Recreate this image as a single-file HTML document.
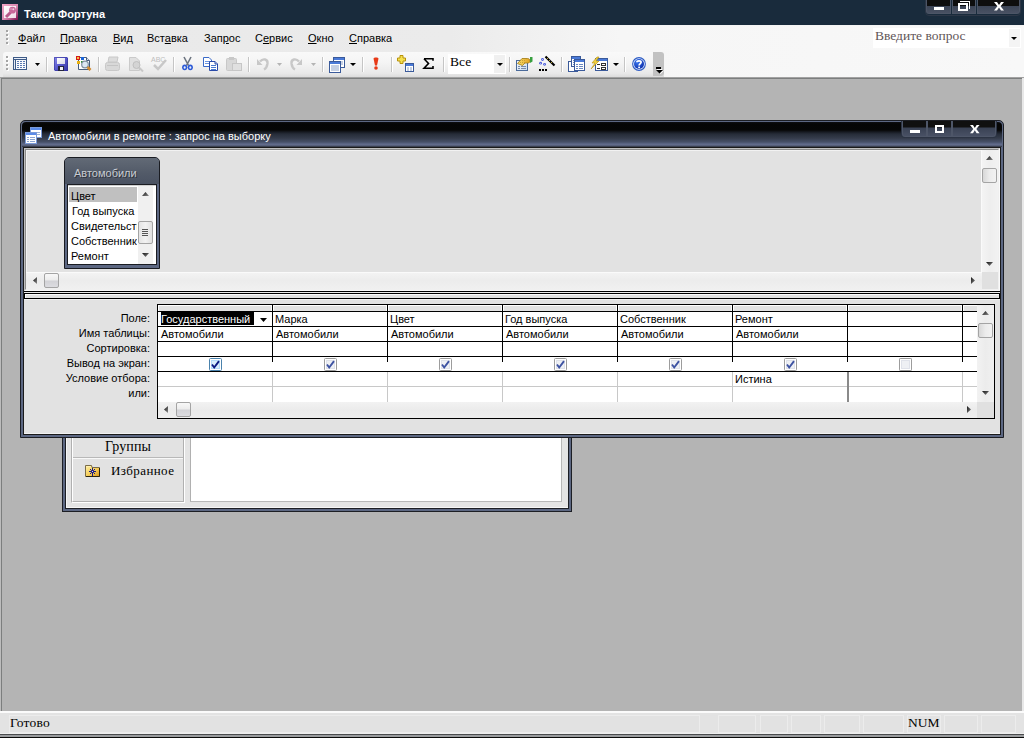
<!DOCTYPE html>
<html><head><meta charset="utf-8">
<style>
*{margin:0;padding:0;box-sizing:border-box}
html,body{width:1024px;height:738px;overflow:hidden;background:#b4b4b4;font-family:"Liberation Sans",sans-serif;font-size:11px;color:#000}
.a{position:absolute}
.t{position:absolute;white-space:nowrap;line-height:13px}
.u{text-decoration:underline}
svg{position:absolute;overflow:visible}
.sep{position:absolute;top:57px;width:2px;height:15px;border-left:1px solid #c5c5c5;border-right:1px solid #fff}
.serif{font-family:"Liberation Serif",serif}
</style></head><body>
<svg width="0" height="0" style="position:absolute"><defs><linearGradient id="agv" x1="0" y1="0" x2="1" y2="1"><stop offset="0" stop-color="#141414"/><stop offset="1" stop-color="#8a8a8a"/></linearGradient></defs></svg>

<!-- ===== Title bar ===== -->
<div class="a" style="left:0;top:0;width:1024px;height:25px;background:#192b3c"></div>
<svg style="left:2px;top:4px" width="16" height="16" viewBox="0 0 16 16">
  <defs><linearGradient id="ak" x1="0" y1="0" x2="1" y2="1"><stop offset="0" stop-color="#f4a8c8"/><stop offset=".55" stop-color="#d888b0"/><stop offset="1" stop-color="#7a0a4a"/></linearGradient>
  <linearGradient id="ai" x1="0" y1="0" x2="1" y2="1"><stop offset="0" stop-color="#fff"/><stop offset="1" stop-color="#f0dce8"/></linearGradient></defs>
  <rect x="0" y="0" width="16" height="16" fill="url(#ak)"/>
  <rect x="2" y="2" width="12" height="12" fill="url(#ai)"/>
  <path d="M8.5 8.5L4 13" stroke="#b8588a" stroke-width="3"/>
  <circle cx="10.5" cy="6.2" r="3.4" fill="#c8689a"/>
  <circle cx="11.3" cy="5.2" r="1" fill="#f4d0e4"/>
  <circle cx="9" cy="5" r=".7" fill="#f0c0d8"/>
</svg>
<div class="t" style="left:24px;top:8px;color:#fff;font-weight:bold">Такси Фортуна</div>
<!-- caption buttons -->
<div class="a" style="left:925px;top:-3px;width:96px;height:19px;border:1px solid #2c3646;border-radius:0 0 4px 4px;background:#192b3c"></div>
<div class="a" style="left:926px;top:0;width:25px;height:14px;background:linear-gradient(#0e0e0e 0,#0e0e0e 6px,#3c4556 6px,#4a5264 14px);border:1px solid #4c5566;border-top:0;border-radius:0 0 0 3px"></div>
<div class="a" style="left:952px;top:0;width:24px;height:14px;background:linear-gradient(#0e0e0e 0,#0e0e0e 6px,#3c4556 6px,#4a5264 14px);border:1px solid #4c5566;border-top:0"></div>
<div class="a" style="left:977px;top:0;width:43px;height:14px;background:linear-gradient(#0e0e0e 0,#0e0e0e 6px,#3c4556 6px,#4a5264 14px);border:1px solid #4c5566;border-top:0;border-radius:0 0 3px 0"></div>
<div class="a" style="left:934px;top:7px;width:10px;height:3px;background:#fff"></div>
<svg style="left:956px;top:0" width="16" height="13" viewBox="0 0 16 13">
  <rect x="4" y="1" width="10" height="1" fill="#fff"/>
  <rect x="13" y="1" width="1" height="8" fill="#fff"/>
  <rect x="3" y="4" width="8" height="6" fill="none" stroke="#fff" stroke-width="2"/>
</svg>
<svg style="left:994px;top:2px" width="10" height="9" viewBox="0 0 10 9">
  <path d="M0 0H3L5 3L7 0H10L6.6 4.3L10 8.6H7L5 5.6L3 8.6H0L3.4 4.3Z" fill="#fff"/>
</svg>

<!-- ===== Menu bar ===== -->
<div class="a" style="left:0;top:25px;width:1024px;height:52px;background:linear-gradient(to right,#e9e9e9 0,#ebebeb 450px,#f6f6f6 620px,#f8f8f8 1024px)"></div>
<div class="a" style="left:0;top:25px;width:1024px;height:1px;background:#f4f4f4"></div>
<svg style="left:6px;top:30px" width="3" height="15" viewBox="0 0 3 15">
  <g fill="#fff"><rect x="1" y="1" width="2" height="2"/><rect x="1" y="5" width="2" height="2"/><rect x="1" y="9" width="2" height="2"/><rect x="1" y="13" width="2" height="2"/></g>
  <g fill="#a4a4a4"><rect x="0" y="0" width="2" height="2"/><rect x="0" y="4" width="2" height="2"/><rect x="0" y="8" width="2" height="2"/><rect x="0" y="12" width="2" height="2"/></g>
</svg>
<div class="t" style="left:18px;top:32px"><span class="u">Ф</span>айл</div>
<div class="t" style="left:60px;top:32px"><span class="u">П</span>равка</div>
<div class="t" style="left:113px;top:32px"><span class="u">В</span>ид</div>
<div class="t" style="left:147px;top:32px">Вст<span class="u">а</span>вка</div>
<div class="t" style="left:204px;top:32px">Зап<span class="u">р</span>ос</div>
<div class="t" style="left:255px;top:32px">С<span class="u">е</span>рвис</div>
<div class="t" style="left:308px;top:32px"><span class="u">О</span>кно</div>
<div class="t" style="left:349px;top:32px"><span class="u">С</span>правка</div>
<!-- question box -->
<div class="a" style="left:873px;top:28px;width:148px;height:20px;background:#fff"></div>
<div class="a" style="left:1009px;top:29px;width:11px;height:18px;background:#f4f4f4"></div>
<div class="t serif" style="left:875px;top:28px;font-size:13.5px;line-height:15px;color:#625658">Введите вопрос</div>
<svg style="left:1011px;top:37px" width="6" height="3" viewBox="0 0 6 3"><path d="M0 0H6L3 3Z" fill="#000"/></svg>

<!-- ===== Toolbar ===== -->
<div class="a" style="left:3px;top:52px;width:661px;height:25px;background:linear-gradient(to bottom,#f9f9f9 0,#f5f5f5 40%,#e9e9e9 85%,#dcdcdc 100%);border-radius:3px 3px 0 0"></div>
<div class="a" style="left:653px;top:52px;width:11px;height:24px;background:#c2c2c2;border-radius:0 3px 3px 0"></div>
<svg style="left:656px;top:67px" width="8" height="8" viewBox="0 0 8 8"><rect x="1" y="2" width="5" height="1" fill="#fff"/><path d="M1 3.5H8L4.5 7Z" fill="#fff"/><rect x="0" y="0" width="5" height="2" fill="#000"/><path d="M0 3H7L3.5 6.5Z" fill="#000"/></svg>
<svg style="left:6px;top:56px" width="3" height="15" viewBox="0 0 3 15">
  <g fill="#fff"><rect x="1" y="1" width="2" height="2"/><rect x="1" y="5" width="2" height="2"/><rect x="1" y="9" width="2" height="2"/><rect x="1" y="13" width="2" height="2"/></g>
  <g fill="#a4a4a4"><rect x="0" y="0" width="2" height="2"/><rect x="0" y="4" width="2" height="2"/><rect x="0" y="8" width="2" height="2"/><rect x="0" y="12" width="2" height="2"/></g>
</svg>
<!-- datasheet icon -->
<svg style="left:13px;top:57px" width="14" height="13" viewBox="0 0 14 13">
  <rect x="0" y="0" width="14" height="13" fill="#3d5a86"/>
  <rect x="1" y="1" width="12" height="1" fill="#e8eef8"/>
  <rect x="1" y="3" width="1" height="9" fill="#e4eaf4"/>
  <rect x="3" y="3" width="10" height="9" fill="#f8fafc"/>
  <g fill="#5a78b0"><rect x="4" y="4" width="2" height="1"/><rect x="7" y="4" width="2" height="1"/><rect x="10" y="4" width="2" height="1"/><rect x="4" y="6" width="2" height="1"/><rect x="7" y="6" width="2" height="1"/><rect x="10" y="6" width="2" height="1"/><rect x="4" y="8" width="2" height="1"/><rect x="7" y="8" width="2" height="1"/><rect x="10" y="8" width="2" height="1"/><rect x="4" y="10" width="2" height="1"/><rect x="7" y="10" width="2" height="1"/><rect x="10" y="10" width="2" height="1"/></g>
</svg>
<svg style="left:35px;top:63px" width="5" height="3" viewBox="0 0 5 3"><path d="M0 0H5L2.5 3Z" fill="#000"/></svg>
<div class="sep" style="left:46px"></div>
<!-- save -->
<svg style="left:54px;top:57px" width="14" height="14" viewBox="0 0 14 14">
  <defs><linearGradient id="sv" x1="0" y1="0" x2="1" y2="1"><stop offset="0" stop-color="#8a8aea"/><stop offset=".5" stop-color="#5858cc"/><stop offset="1" stop-color="#3434a0"/></linearGradient>
  <linearGradient id="lb" x1="0" y1="0" x2="1" y2="1"><stop offset="0" stop-color="#fff"/><stop offset="1" stop-color="#d8d8e8"/></linearGradient></defs>
  <path d="M0 0H13L14 1V14H1L0 13Z" fill="url(#sv)"/>
  <path d="M0.5 13V0.5H13M13.5 1V13.5H1" fill="none" stroke="#2a2a90" stroke-opacity=".5"/>
  <rect x="3" y="1" width="8" height="6" fill="url(#lb)"/>
  <rect x="4" y="9" width="6" height="5" fill="#24243c"/>
  <rect x="6" y="10" width="3" height="3" fill="#f0f0f4"/>
</svg>
<!-- search/preview -->
<svg style="left:76px;top:56px" width="16" height="16" viewBox="0 0 16 16">
  <path d="M2.5 1.5H10.5L13.5 4.5V13.5H2.5Z" fill="#fff" stroke="#465c7c"/>
  <path d="M10.5 1.5V4.5H13.5" fill="#dde4ee" stroke="#465c7c"/>
  <rect x="0" y="0" width="4" height="4" fill="#d41a1a"/><rect x="1" y="1" width="2" height="2" fill="#f4c040"/>
  <rect x="5" y="1" width="3" height="3" fill="#1a64d8"/>
  <rect x="1" y="5" width="3" height="3" fill="#e8b010"/>
  <rect x="5" y="5" width="2" height="2" fill="#2a9a2a"/>
  <circle cx="9" cy="8.5" r="3.3" fill="#dce8f4" stroke="#8090a0" stroke-width="1.2"/>
  <path d="M11.5 11L14.5 14" stroke="#d08a30" stroke-width="2.6"/>
</svg>
<div class="sep" style="left:98px"></div>
<!-- print disabled -->
<svg style="left:105px;top:57px" width="15" height="14" viewBox="0 0 15 14">
  <path d="M4 0H13L12 5H3Z" fill="#dcdcdc" stroke="#c8c8c8"/>
  <rect x="0.5" y="5.5" width="14" height="8" rx="2" fill="#d8d8d8" stroke="#c8c8c8"/>
  <rect x="2" y="8" width="11" height="1" fill="#c4c4c4"/>
</svg>
<svg style="left:129px;top:57px" width="15" height="15" viewBox="0 0 15 15">
  <path d="M0.5 0.5H7L10.5 4V13.5H0.5Z" fill="#e0e0e0" stroke="#cacaca"/>
  <circle cx="7.5" cy="8" r="3.5" fill="#d4d4d4" stroke="#c0c0c0"/>
  <path d="M10 10.5L14 14.5" stroke="#c8c8c8" stroke-width="2"/>
</svg>
<svg style="left:151px;top:56px" width="16" height="14" viewBox="0 0 16 14">
  <text x="0" y="6" font-family="Liberation Sans" font-size="7" fill="#bdbdbd">ABC</text>
  <path d="M3 9L7 13L15 4" fill="none" stroke="#c8c8c8" stroke-width="2.5"/>
</svg>
<div class="sep" style="left:173px"></div>
<!-- scissors -->
<svg style="left:182px;top:57px" width="11" height="14" viewBox="0 0 11 14">
  <path d="M2 0L6.5 8.5M9 0L4.5 8.5" stroke="#6c7480" stroke-width="1.6"/>
  <ellipse cx="2.7" cy="10.3" rx="2.6" ry="2.9" fill="#2c5ad6"/>
  <ellipse cx="8.3" cy="10.3" rx="2.6" ry="2.9" fill="#2c5ad6"/>
  <ellipse cx="2.7" cy="10.5" rx="1" ry="1.3" fill="#e8eef8"/>
  <ellipse cx="8.3" cy="10.5" rx="1" ry="1.3" fill="#e8eef8"/>
</svg>
<!-- copy -->
<svg style="left:203px;top:57px" width="16" height="14" viewBox="0 0 16 14">
  <path d="M0.5 0.5H6L8.5 3V9.5H0.5Z" fill="#fff" stroke="#3a6ac8"/>
  <path d="M2 4.5H7M2 6.5H7" stroke="#6a94e0"/>
  <path d="M6.5 4.5H12L14.5 7V13.5H6.5Z" fill="#fff" stroke="#2a4aa8"/>
  <path d="M12 4.5V7H14.5" fill="#c8d8f4" stroke="#2a4aa8"/>
  <path d="M8 8.5H13M8 10.5H13M8 12.5H13" stroke="#4a7ad0"/>
</svg>
<!-- paste disabled -->
<svg style="left:226px;top:57px" width="16" height="14" viewBox="0 0 16 14">
  <rect x="0.5" y="1.5" width="10" height="12" rx="1" fill="#d8d8d8" stroke="#c8c8c8"/>
  <rect x="3" y="0" width="5" height="3" fill="#c8c8c8"/>
  <rect x="6.5" y="6.5" width="9" height="7" fill="#e0e0e0" stroke="#c6c6c6"/>
</svg>
<div class="sep" style="left:248px"></div>
<!-- undo/redo disabled -->
<svg style="left:257px;top:57px" width="12" height="13" viewBox="0 0 12 13">
  <path d="M3 4.5C6 1 11 2 10.5 6.5C10 10 8 12 7 12.5" fill="none" stroke="#c8c8c8" stroke-width="2.4"/>
  <path d="M0 2V8H5.5Z" fill="#c8c8c8"/>
</svg>
<svg style="left:277px;top:63px" width="5" height="3" viewBox="0 0 5 3"><path d="M0 0H5L2.5 3Z" fill="#b4b4b4"/></svg>
<svg style="left:290px;top:57px" width="12" height="13" viewBox="0 0 12 13">
  <path d="M9 4.5C6 1 1 2 1.5 6.5C2 10 4 12 5 12.5" fill="none" stroke="#c8c8c8" stroke-width="2.4"/>
  <path d="M12 2V8H6.5Z" fill="#c8c8c8"/>
</svg>
<svg style="left:311px;top:63px" width="5" height="3" viewBox="0 0 5 3"><path d="M0 0H5L2.5 3Z" fill="#b4b4b4"/></svg>
<div class="sep" style="left:322px"></div>
<!-- query type -->
<svg style="left:329px;top:57px" width="16" height="16" viewBox="0 0 16 16">
  <rect x="4.5" y="0.5" width="11" height="10" fill="#fff" stroke="#3a5a9a"/>
  <rect x="5" y="1" width="10" height="2" fill="#4a7ad8"/>
  <path d="M6 5H14M6 7H14" stroke="#8aa0c8"/>
  <rect x="0.5" y="4.5" width="11" height="11" fill="#fff" stroke="#3a5a9a"/>
  <rect x="1" y="5" width="10" height="2" fill="#4a7ad8"/>
  <path d="M2 9H10M2 11H10M2 13H10" stroke="#8aa0c8"/>
</svg>
<svg style="left:350px;top:63px" width="6" height="3" viewBox="0 0 6 3"><path d="M0 0H6L3 3Z" fill="#000"/></svg>
<div class="sep" style="left:362px"></div>
<!-- run -->
<svg style="left:373px;top:57px" width="6" height="13" viewBox="0 0 6 13">
  <path d="M0.5 1.5C0.5 0 5.5 0 5.5 1.5L4 8.5H2Z" fill="#e83a18"/>
  <circle cx="3" cy="11" r="1.8" fill="#e83a18"/>
</svg>
<div class="sep" style="left:391px"></div>
<!-- show table -->
<svg style="left:397px;top:55px" width="18" height="18" viewBox="0 0 18 18">
  <path d="M3 0.5H6V3H8.5V6H6V8.5H3V6H0.5V3H3Z" fill="#f4e050" stroke="#b8920a"/>
  <rect x="8.5" y="8.5" width="8" height="8" fill="#fff" stroke="#3a5a9a"/>
  <rect x="9" y="9" width="7" height="2" fill="#4a7ad8"/>
  <path d="M10 13H12M13 13H15M10 15H12M13 15H15" stroke="#8aa0c8"/>
</svg>
<!-- sigma -->
<svg style="left:423px;top:58px" width="11" height="11" viewBox="0 0 11 11">
  <path d="M1 0.8H10V2.8M1 0.8L5.5 5.5L1 10.2H10V8" fill="none" stroke="#000" stroke-width="1.6"/>
</svg>
<div class="sep" style="left:443px"></div>
<!-- combo -->
<div class="a" style="left:448px;top:54px;width:58px;height:20px;background:#fff"></div>
<div class="a" style="left:494px;top:55px;width:11px;height:18px;background:#f0f0f0"></div>
<svg style="left:497px;top:63px" width="6" height="3" viewBox="0 0 6 3"><path d="M0 0H6L3 3Z" fill="#000"/></svg>
<div class="t serif" style="left:450px;top:54px;font-size:13.5px;line-height:15px">Все</div>
<div class="sep" style="left:509px"></div>
<!-- properties -->
<svg style="left:516px;top:56px" width="17" height="16" viewBox="0 0 17 16">
  <defs><linearGradient id="pd" x1="0" y1="0" x2="1" y2="1"><stop offset="0" stop-color="#f4f8fc"/><stop offset="1" stop-color="#c8dcf0"/></linearGradient>
  <linearGradient id="ph" x1="0" y1="0" x2="1" y2="0"><stop offset="0" stop-color="#f8e070"/><stop offset="1" stop-color="#e0a020"/></linearGradient></defs>
  <rect x="0.5" y="4.5" width="11" height="10" fill="url(#pd)" stroke="#4a6a9a"/>
  <path d="M2 10.5H4M5 10.5H10M2 12.5H4M5 12.5H10" stroke="#7a8aa8"/>
  <path d="M1.5 7.5L6 2.5H11.5C13 2.5 14 3.5 14 5C14 6.5 13 7 11.5 7H9L6.5 9.5Z" fill="url(#ph)" stroke="#a07810" stroke-width=".8"/>
  <path d="M4 6L5 7M6 4L7 5M6 6L7 7M8 4L9 5M8 6L9 7" stroke="#b08820" stroke-width=".6"/>
  <path d="M14 1V7L16.5 5.5V1Z" fill="#38a040"/>
</svg>
<!-- builder -->
<svg style="left:539px;top:56px" width="17" height="16" viewBox="0 0 17 16">
  <circle cx="3.5" cy="3.5" r="1.4" fill="#4a5ad8"/><circle cx="3.5" cy="3.5" r=".5" fill="#e0e4ff"/>
  <circle cx="1.6" cy="7.2" r="1.4" fill="#4a5ad8"/><circle cx="1.6" cy="7.2" r=".5" fill="#e0e4ff"/>
  <circle cx="5.6" cy="8.3" r="1.4" fill="#4a5ad8"/><circle cx="5.6" cy="8.3" r=".5" fill="#e0e4ff"/>
  <path d="M6.5 0.5L15.5 9.5" stroke="#000" stroke-width="2.2"/>
  <path d="M8 2L9 3M10 4L11 5M12 6L13 7" stroke="#e8d040" stroke-width=".8"/>
  <rect x="0" y="13" width="2" height="2" fill="#000"/><rect x="3" y="13" width="2" height="2" fill="#000"/><rect x="6" y="13" width="2" height="2" fill="#000"/>
</svg>
<div class="sep" style="left:561px"></div>
<!-- database window -->
<svg style="left:568px;top:56px" width="17" height="16" viewBox="0 0 17 16">
  <rect x="0.5" y="5.5" width="9" height="10" fill="#fff" stroke="#3a5a9a"/>
  <rect x="3.5" y="0.5" width="9" height="10" fill="#fff" stroke="#3a5a9a"/>
  <rect x="4" y="1" width="8" height="2" fill="#4a7ad8"/>
  <path d="M5 4.5H6M5 6.5H6M5 8.5H6" stroke="#6a88c0"/>
  <rect x="6.5" y="3.5" width="10" height="11" fill="#fff" stroke="#3a5a9a"/>
  <rect x="7" y="4" width="9" height="2" fill="#4a7ad8"/>
  <path d="M8 8.5H10M11 8.5H15M8 10.5H10M11 10.5H15M8 12.5H10M11 12.5H15" stroke="#6a88c0"/>
</svg>
<!-- new object -->
<svg style="left:591px;top:57px" width="17" height="14" viewBox="0 0 17 14">
  <rect x="4.5" y="1.5" width="12" height="12" fill="#fff" stroke="#3a5a9a"/>
  <rect x="5" y="2" width="11" height="2" fill="#4a7ad8"/>
  <rect x="10.5" y="6.5" width="4" height="2" fill="#fff" stroke="#333"/>
  <rect x="10.5" y="10.5" width="4" height="2" fill="#fff" stroke="#333"/>
  <path d="M6 7.5H9M6 11.5H9" stroke="#333"/>
  <path d="M6 0L1 6H4L0 12L8 4H5L8 0Z" fill="#f0d040" stroke="#b89010" stroke-width=".6"/>
</svg>
<svg style="left:613px;top:63px" width="6" height="3" viewBox="0 0 6 3"><path d="M0 0H6L3 3Z" fill="#000"/></svg>
<div class="sep" style="left:624px"></div>
<!-- help -->
<svg style="left:632px;top:57px" width="14" height="14" viewBox="0 0 14 14">
  <defs><radialGradient id="hg" cx=".35" cy=".3" r=".8"><stop offset="0" stop-color="#3a78f0"/><stop offset="1" stop-color="#0a2aa8"/></radialGradient></defs>
  <circle cx="7" cy="7" r="6.9" fill="#2e5cc4"/>
  <circle cx="7" cy="7" r="5.8" fill="#e8f0ff"/>
  <circle cx="7" cy="7" r="5" fill="url(#hg)"/>
  <path d="M4.9 5.3C4.9 3.4 9.1 3.4 9.1 5.3C9.1 6.7 7.1 6.6 7.1 8.6" fill="none" stroke="#fff" stroke-width="1.7"/>
  <rect x="6.2" y="9.6" width="1.8" height="1.6" fill="#fff"/>
</svg>


<!-- ===== MDI ===== -->
<div class="a" style="left:0;top:77px;width:1024px;height:634px;background:#b4b4b4"></div>
<div class="a" style="left:0;top:77px;width:1024px;height:1px;background:#a2a2a2"></div>
<div class="a" style="left:1px;top:78px;width:1022px;height:1px;background:#7c7e7e"></div>
<div class="a" style="left:0;top:78px;width:1px;height:633px;background:#bcbcbc"></div>
<div class="a" style="left:1px;top:78px;width:1px;height:633px;background:#7c7e7e"></div>
<div class="a" style="left:1022px;top:78px;width:2px;height:633px;background:#e8e8e8"></div>

<!-- ===== DB window (background) ===== -->
<div class="a" style="left:62px;top:400px;width:510px;height:112px;background:#5c6782;border:1px solid #1c1e24;border-top:0"></div>
<div class="a" style="left:65px;top:400px;width:504px;height:109px;background:#e4e4e4;border:1px solid #1c1e24;border-top:0"></div>
<div class="a" style="left:66px;top:400px;width:1px;height:108px;background:#f6f6f6"></div>
<div class="a" style="left:66px;top:507px;width:502px;height:1px;background:#f6f6f6"></div>
<!-- left panel etched -->
<div class="a" style="left:71px;top:400px;width:114px;height:103px;border-left:1px solid #b0b0b0;border-right:1px solid #fff;border-bottom:1px solid #fff"></div>
<div class="a" style="left:72px;top:400px;width:112px;height:102px;border-left:1px solid #fff;border-right:1px solid #b0b0b0;border-bottom:1px solid #b0b0b0;background:#e2e2e2"></div>
<div class="a" style="left:73px;top:457px;width:110px;height:1px;background:#b8b8b8"></div>
<div class="a" style="left:73px;top:458px;width:110px;height:1px;background:#f8f8f8"></div>
<div class="t serif" style="left:105px;top:439px;font-size:14px;line-height:16px;letter-spacing:.1px">Группы</div>
<svg style="left:85px;top:465px" width="15" height="12" viewBox="0 0 15 12">
  <defs><linearGradient id="fg" x1="0" y1="0" x2="1" y2="1"><stop offset="0" stop-color="#fff2a8"/><stop offset=".6" stop-color="#f4c850"/><stop offset="1" stop-color="#d89418"/></linearGradient></defs>
  <path d="M0.5 11.5V0.5H6.5L7 2.5H14.5V11.5Z" fill="url(#fg)" stroke="#7a6c48"/>
  <rect x="1" y="1" width="5" height="1" fill="#fff0b0"/>
  <path d="M14.5 3V11.5H1" fill="none" stroke="#2a2410"/>
  <rect x="7" y="3" width="1" height="8" fill="#1a1a80"/><rect x="4" y="6" width="7" height="1" fill="#1a1a80"/>
  <circle cx="7.5" cy="6.5" r="1.8" fill="#1a1a80"/><circle cx="7.5" cy="6.5" r=".6" fill="#fff"/>
  <rect x="5" y="4" width="1" height="1" fill="#1a1a80"/><rect x="9" y="4" width="1" height="1" fill="#1a1a80"/><rect x="5" y="8" width="1" height="1" fill="#1a1a80"/><rect x="9" y="8" width="1" height="1" fill="#1a1a80"/>
</svg>
<div class="t serif" style="left:111px;top:463px;font-size:13px;line-height:16px;letter-spacing:.4px">Избранное</div>
<!-- right list -->
<div class="a" style="left:190px;top:400px;width:372px;height:102px;background:#fff;border-left:1px solid #b0b0b0;border-right:1px solid #b8b8b8;border-bottom:1px solid #b8b8b8"></div>


<!-- ===== Query window ===== -->
<div class="a" style="left:20px;top:120px;width:984px;height:318px;background:#5c6782;border:1px solid #1c1e24;border-radius:5px 5px 0 0"></div>
<div class="a" style="left:22px;top:122px;width:980px;height:25px;border-radius:4px 4px 0 0;background:linear-gradient(to bottom,#0e0e10 0,#050505 2px,#060606 8px,#161a22 10px,#262c38 12px,#343b4a 16px,#465068 20px,#5e6888 22px,#636d8c 23px,#4a5268 24px,#2a2e38 25px)"></div>
<svg style="left:25px;top:127px" width="17" height="17" viewBox="0 0 17 17">
  <rect x="5.5" y="0.5" width="11" height="10" fill="#fff" stroke="#7a9ad8"/>
  <rect x="6" y="1" width="10" height="2" fill="#5a8ae8"/>
  <path d="M12 5.5H15M12 7.5H15" stroke="#9ab0d8"/>
  <rect x="0.5" y="5.5" width="11" height="11" fill="#fff" stroke="#7a9ad8"/>
  <rect x="1" y="6" width="10" height="2" fill="#5a8ae8"/>
  <path d="M2 10.5H4M5 10.5H10M2 12.5H4M5 12.5H10M2 14.5H4M5 14.5H10" stroke="#8aa4d4"/>
</svg>
<div class="t" style="left:48px;top:130px;color:#fff">Автомобили в ремонте : запрос на выборку</div>
<!-- caption buttons -->
<div class="a" style="left:901px;top:121px;width:96px;height:17px;border:1px solid #2c3444;border-top:0;border-radius:0 0 4px 4px"></div>
<div class="a" style="left:902px;top:121px;width:25px;height:16px;background:linear-gradient(#101010 0,#101010 6px,#3a4254 7px,#4a5266 16px);border:1px solid #4e5668;border-top:0;border-radius:0 0 0 3px"></div>
<div class="a" style="left:927px;top:121px;width:25px;height:16px;background:linear-gradient(#101010 0,#101010 6px,#3a4254 7px,#4a5266 16px);border:1px solid #4e5668;border-top:0"></div>
<div class="a" style="left:952px;top:121px;width:44px;height:16px;background:linear-gradient(#101010 0,#101010 6px,#3a4254 7px,#4a5266 16px);border:1px solid #4e5668;border-top:0;border-radius:0 0 3px 0"></div>
<div class="a" style="left:910px;top:130px;width:10px;height:3px;background:#fff"></div>
<div class="a" style="left:935px;top:125px;width:9px;height:8px;border:2px solid #fff;border-top-width:2px"></div>
<svg style="left:970px;top:125px" width="10" height="9" viewBox="0 0 10 9">
  <path d="M0 0H3L4.8 3L6.6 0H9.6L6.3 4.1L9.6 8.2H6.6L4.8 5.3L3 8.2H0L3.3 4.1Z" fill="#fff"/>
</svg>
<!-- client -->
<div class="a" style="left:23px;top:147px;width:978px;height:288px;background:#e2e2e2;border:1px solid #1a1a1a"></div>
<!-- upper pane sunken border -->
<div class="a" style="left:24px;top:148px;width:976px;height:143px;border-left:1px solid #c0c0c0;border-top:1px solid #c0c0c0;border-right:1px solid #fafafa;border-bottom:1px solid #fafafa"></div>
<div class="a" style="left:25px;top:149px;width:974px;height:141px;border-left:1px solid #8c8c8c;border-top:1px solid #8c8c8c;border-right:1px solid #f0f0f0;border-bottom:1px solid #f0f0f0"></div>
<div class="a" style="left:26px;top:150px;width:956px;height:1px;background:#f2f2f2"></div>
<div class="a" style="left:26px;top:150px;width:1px;height:122px;background:#f2f2f2"></div>
<!-- upper v-scroll -->
<div class="a" style="left:982px;top:150px;width:16px;height:122px;background:linear-gradient(to right,#f4f4f4,#eeeeee 50%,#f2f2f2)"></div>
<div class="a" style="left:981px;top:150px;width:1px;height:122px;background:#fafafa"></div>
<svg style="left:986px;top:156px" width="7" height="4" viewBox="0 0 7 4"><path d="M3.5 0L7 4H0Z" fill="url(#agv)"/></svg>
<div class="a" style="left:982px;top:168px;width:15px;height:15px;border:1px solid #a4a4a4;border-radius:2px;background:linear-gradient(to right,#d8d8d8,#ececec 50%,#f2f2f2)"></div>
<svg style="left:986px;top:262px" width="7" height="4" viewBox="0 0 7 4"><path d="M0 0H7L3.5 4Z" fill="url(#agv)"/></svg>
<!-- upper h-scroll -->
<div class="a" style="left:26px;top:272px;width:956px;height:17px;background:linear-gradient(to bottom,#f4f4f4,#ececec 50%,#f0f0f0)"></div>
<div class="a" style="left:26px;top:272px;width:956px;height:1px;background:#fafafa"></div>
<div class="a" style="left:982px;top:272px;width:16px;height:17px;background:#e0e0e0"></div>
<svg style="left:33px;top:277px" width="4" height="7" viewBox="0 0 4 7"><path d="M4 0V7L0 3.5Z" fill="url(#agv)"/></svg>
<div class="a" style="left:44px;top:273px;width:15px;height:15px;border:1px solid #a4a4a4;border-radius:2px;background:linear-gradient(to bottom,#f8f8f8,#ececec 48%,#d2d2d6 52%,#dcdce0)"></div>
<svg style="left:971px;top:277px" width="4" height="7" viewBox="0 0 4 7"><path d="M0 0V7L4 3.5Z" fill="url(#agv)"/></svg>
<!-- table box -->
<div class="a" style="left:64px;top:157px;width:96px;height:112px;background:#5c6782;border:1px solid #1a1c22;border-radius:5px 5px 0 0"></div>
<div class="a" style="left:65px;top:158px;width:94px;height:26px;border-radius:4px 4px 0 0;background:linear-gradient(to bottom,#626a76,#525a68 60%,#4a5262)"></div>
<div class="t" style="left:74px;top:167px;color:#c8ccd2;text-shadow:1px 1px 0 #30343c">Автомобили</div>
<div class="a" style="left:67px;top:184px;width:90px;height:81px;background:#fff;border:1px solid #1a1c22"></div>
<div class="a" style="left:68px;top:185px;width:88px;height:1px;background:#d0d0d0"></div>
<div class="a" style="left:69px;top:187px;width:68px;height:15px;background:#c0c0c0"></div>
<div class="a" style="left:138px;top:186px;width:15px;height:78px;background:#f0f0f0"></div>
<svg style="left:142px;top:192px" width="7" height="4" viewBox="0 0 7 4"><path d="M3.5 0L7 4H0Z" fill="url(#agv)"/></svg>
<div class="a" style="left:138px;top:221px;width:15px;height:23px;border:1px solid #a4a4a4;border-radius:2px;background:linear-gradient(to right,#e4e4e4,#f2f2f2 50%,#e0e0e0)"></div>
<svg style="left:141px;top:228px" width="8" height="8" viewBox="0 0 8 8"><path d="M1 1.5H7M1 3.5H7M1 5.5H7M1 7.5H7" stroke="#555" stroke-width="1"/></svg>
<svg style="left:142px;top:253px" width="7" height="4" viewBox="0 0 7 4"><path d="M0 0H7L3.5 4Z" fill="url(#agv)"/></svg>
<div class="t" style="left:71px;top:190px">Цвет</div>
<div class="t" style="left:72px;top:205px">Год выпуска</div>
<div class="a" style="left:69px;top:204px;width:68px;height:60px;overflow:hidden">
  <div class="t" style="left:2px;top:16px">Свидетельство</div>
  <div class="t" style="left:2px;top:31px">Собственник</div>
  <div class="t" style="left:2px;top:46px">Ремонт</div>
</div>
<!-- splitter -->
<div class="a" style="left:24px;top:291px;width:976px;height:1px;background:#000"></div>
<div class="a" style="left:24px;top:292px;width:976px;height:1px;background:#ececec"></div>
<div class="a" style="left:24px;top:293px;width:976px;height:6px;background:#e2e2e2;border:1px solid #000"></div>
<div class="a" style="left:25px;top:294px;width:974px;height:1px;background:#fcfcfc"></div>
<div class="a" style="left:25px;top:294px;width:1px;height:4px;background:#fcfcfc"></div>
<div class="a" style="left:24px;top:299px;width:976px;height:1px;background:#f2f2f2"></div>
<div class="a" style="left:24px;top:433px;width:976px;height:1px;background:#f2f2f2"></div>
<!-- labels -->
<div class="t" style="right:874px;top:312px;text-align:right">Поле:</div>
<div class="t" style="right:874px;top:327px;text-align:right">Имя таблицы:</div>
<div class="t" style="right:874px;top:342px;text-align:right">Сортировка:</div>
<div class="t" style="right:874px;top:357px;text-align:right">Вывод на экран:</div>
<div class="t" style="right:874px;top:372px;text-align:right">Условие отбора:</div>
<div class="t" style="right:874px;top:387px;text-align:right">или:</div>
<!-- GRID_START -->
<div class="a" style="left:157px;top:304px;width:838px;height:115px;background:#fff;border:1px solid #000"></div>
<div class="a" style="left:159px;top:306px;width:112px;height:5px;background:#e2e2e2"></div>
<div class="a" style="left:274px;top:306px;width:112px;height:5px;background:#e2e2e2"></div>
<div class="a" style="left:389px;top:306px;width:112px;height:5px;background:#e2e2e2"></div>
<div class="a" style="left:504px;top:306px;width:112px;height:5px;background:#e2e2e2"></div>
<div class="a" style="left:619px;top:306px;width:112px;height:5px;background:#e2e2e2"></div>
<div class="a" style="left:734px;top:306px;width:112px;height:5px;background:#e2e2e2"></div>
<div class="a" style="left:849px;top:306px;width:112px;height:5px;background:#e2e2e2"></div>
<div class="a" style="left:964px;top:306px;width:13px;height:5px;background:#e2e2e2"></div>
<div class="a" style="left:158px;top:311px;width:819px;height:1px;background:#000"></div>
<div class="a" style="left:158px;top:326px;width:819px;height:1px;background:#000"></div>
<div class="a" style="left:158px;top:341px;width:819px;height:1px;background:#000"></div>
<div class="a" style="left:158px;top:356px;width:819px;height:1px;background:#000"></div>
<div class="a" style="left:158px;top:371px;width:819px;height:1px;background:#000"></div>
<div class="a" style="left:158px;top:386px;width:819px;height:1px;background:#c8c8c8"></div>
<div class="a" style="left:272px;top:305px;width:1px;height:57px;background:#000"></div>
<div class="a" style="left:272px;top:372px;width:1px;height:30px;background:#c8c8c8"></div>
<div class="a" style="left:387px;top:305px;width:1px;height:57px;background:#000"></div>
<div class="a" style="left:387px;top:372px;width:1px;height:30px;background:#c8c8c8"></div>
<div class="a" style="left:502px;top:305px;width:1px;height:57px;background:#000"></div>
<div class="a" style="left:502px;top:372px;width:1px;height:30px;background:#c8c8c8"></div>
<div class="a" style="left:617px;top:305px;width:1px;height:57px;background:#000"></div>
<div class="a" style="left:617px;top:372px;width:1px;height:30px;background:#c8c8c8"></div>
<div class="a" style="left:732px;top:305px;width:1px;height:57px;background:#000"></div>
<div class="a" style="left:732px;top:372px;width:1px;height:30px;background:#c8c8c8"></div>
<div class="a" style="left:847px;top:305px;width:1px;height:57px;background:#000"></div>
<div class="a" style="left:847px;top:372px;width:2px;height:30px;background:#8a8a8a"></div>
<div class="a" style="left:962px;top:305px;width:1px;height:57px;background:#000"></div>
<div class="a" style="left:962px;top:372px;width:1px;height:30px;background:#c8c8c8"></div>
<div class="a" style="left:161px;top:312px;width:93px;height:13px;background:#000"></div>
<div class="t" style="left:161px;top:313px;color:#fff">Государственный</div>
<svg style="left:260px;top:318px" width="7" height="4" viewBox="0 0 7 4"><path d="M0 0H7L3.5 4Z" fill="#000"/></svg>
<div class="t" style="left:161px;top:328px">Автомобили</div>
<div class="t" style="left:275px;top:313px">Марка</div>
<div class="t" style="left:276px;top:328px">Автомобили</div>
<div class="t" style="left:390px;top:313px">Цвет</div>
<div class="t" style="left:391px;top:328px">Автомобили</div>
<div class="t" style="left:505px;top:313px">Год выпуска</div>
<div class="t" style="left:506px;top:328px">Автомобили</div>
<div class="t" style="left:620px;top:313px">Собственник</div>
<div class="t" style="left:621px;top:328px">Автомобили</div>
<div class="t" style="left:735px;top:313px">Ремонт</div>
<div class="t" style="left:736px;top:328px">Автомобили</div>
<div class="t" style="left:735px;top:373px">Истина</div>
<svg style="left:209px;top:358px" width="13" height="13" viewBox="0 0 13 13"><rect x="0.5" y="0.5" width="12" height="12" rx="1" fill="#fff" stroke="#4a82ac"/><rect x="2" y="2" width="9" height="9" fill="#b4dcfa"/><rect x="3" y="3" width="7" height="7" fill="#d8eefc"/><path d="M3 6.5L5.2 9.5L10 3.2" fill="none" stroke="#0a1a82" stroke-width="1.9"/></svg>
<svg style="left:324px;top:358px" width="13" height="13" viewBox="0 0 13 13"><rect x="0.5" y="0.5" width="12" height="12" rx="1" fill="#fff" stroke="#9c9c9c"/><rect x="2" y="2" width="9" height="9" fill="#dfe2ea"/><rect x="3" y="3" width="7" height="7" fill="#eef0f4"/><path d="M3 6.5L5.2 9.5L10 3.2" fill="none" stroke="#3d52a2" stroke-width="1.9"/></svg>
<svg style="left:439px;top:358px" width="13" height="13" viewBox="0 0 13 13"><rect x="0.5" y="0.5" width="12" height="12" rx="1" fill="#fff" stroke="#9c9c9c"/><rect x="2" y="2" width="9" height="9" fill="#dfe2ea"/><rect x="3" y="3" width="7" height="7" fill="#eef0f4"/><path d="M3 6.5L5.2 9.5L10 3.2" fill="none" stroke="#3d52a2" stroke-width="1.9"/></svg>
<svg style="left:554px;top:358px" width="13" height="13" viewBox="0 0 13 13"><rect x="0.5" y="0.5" width="12" height="12" rx="1" fill="#fff" stroke="#9c9c9c"/><rect x="2" y="2" width="9" height="9" fill="#dfe2ea"/><rect x="3" y="3" width="7" height="7" fill="#eef0f4"/><path d="M3 6.5L5.2 9.5L10 3.2" fill="none" stroke="#3d52a2" stroke-width="1.9"/></svg>
<svg style="left:669px;top:358px" width="13" height="13" viewBox="0 0 13 13"><rect x="0.5" y="0.5" width="12" height="12" rx="1" fill="#fff" stroke="#9c9c9c"/><rect x="2" y="2" width="9" height="9" fill="#dfe2ea"/><rect x="3" y="3" width="7" height="7" fill="#eef0f4"/><path d="M3 6.5L5.2 9.5L10 3.2" fill="none" stroke="#3d52a2" stroke-width="1.9"/></svg>
<svg style="left:784px;top:358px" width="13" height="13" viewBox="0 0 13 13"><rect x="0.5" y="0.5" width="12" height="12" rx="1" fill="#fff" stroke="#9c9c9c"/><rect x="2" y="2" width="9" height="9" fill="#dfe2ea"/><rect x="3" y="3" width="7" height="7" fill="#eef0f4"/><path d="M3 6.5L5.2 9.5L10 3.2" fill="none" stroke="#3d52a2" stroke-width="1.9"/></svg>
<svg style="left:899px;top:358px" width="13" height="13" viewBox="0 0 13 13"><rect x="0.5" y="0.5" width="12" height="12" rx="1" fill="#fff" stroke="#9c9c9c"/><rect x="2" y="2" width="9" height="9" fill="#dfe2ea"/><rect x="3" y="3" width="7" height="7" fill="#eef0f4"/></svg>
<svg style="left:899px;top:358px" width="13" height="13" viewBox="0 0 13 13"><rect x="0.5" y="0.5" width="12" height="12" rx="1" fill="#fff" stroke="#9c9c9c"/><rect x="2" y="2" width="9" height="9" fill="#dfe2ea"/><rect x="3" y="3" width="7" height="7" fill="#eef0f4"/></svg>
<div class="a" style="left:977px;top:305px;width:17px;height:97px;background:linear-gradient(to right,#f2f2f2,#ececec 50%,#f0f0f0)"></div>
<svg style="left:982px;top:311px" width="7" height="4" viewBox="0 0 7 4"><path d="M3.5 0L7 4H0Z" fill="url(#agv)"/></svg>
<div class="a" style="left:978px;top:323px;width:15px;height:15px;border:1px solid #a4a4a4;border-radius:2px;background:linear-gradient(to right,#d8d8d8,#ececec 50%,#f2f2f2)"></div>
<svg style="left:982px;top:391px" width="7" height="4" viewBox="0 0 7 4"><path d="M0 0H7L3.5 4Z" fill="url(#agv)"/></svg>
<div class="a" style="left:158px;top:402px;width:819px;height:16px;background:linear-gradient(to bottom,#f2f2f2,#ebebeb 50%,#eeeeee)"></div>
<div class="a" style="left:977px;top:402px;width:17px;height:16px;background:#e0e0e0"></div>
<svg style="left:164px;top:406px" width="4" height="7" viewBox="0 0 4 7"><path d="M4 0V7L0 3.5Z" fill="url(#agv)"/></svg>
<div class="a" style="left:176px;top:402px;width:15px;height:15px;border:1px solid #a4a4a4;border-radius:2px;background:linear-gradient(to bottom,#f8f8f8,#ececec 48%,#d2d2d6 52%,#dcdce0)"></div>
<svg style="left:967px;top:406px" width="4" height="7" viewBox="0 0 4 7"><path d="M0 0V7L4 3.5Z" fill="url(#agv)"/></svg>
<!-- GRID_END -->


<!-- ===== Status bar ===== -->
<div class="a" style="left:0;top:711px;width:1024px;height:27px;background:#e3e3e3"></div>
<div class="a" style="left:0;top:711px;width:1024px;height:2px;background:#fbfbfb"></div>
<div class="a" style="left:0;top:733px;width:1024px;height:1px;background:#eeeeee"></div>
<div class="a" style="left:0;top:734px;width:1024px;height:1px;background:#4a4c4e"></div>
<div class="a" style="left:0;top:735px;width:1024px;height:2px;background:#9a9c9e"></div>
<div class="a" style="left:0;top:737px;width:1024px;height:1px;background:#0a0a0a"></div>
<div class="a" style="left:9px;top:715px;width:691px;height:18px;border:1px solid #ececec;background:#e2e2e2"></div>
<div class="a" style="left:718px;top:715px;width:38px;height:18px;border:1px solid #ececec;background:#e2e2e2"></div>
<div class="a" style="left:760px;top:715px;width:28px;height:18px;border:1px solid #ececec;background:#e2e2e2"></div>
<div class="a" style="left:791px;top:715px;width:30px;height:18px;border:1px solid #ececec;background:#e2e2e2"></div>
<div class="a" style="left:824px;top:715px;width:36px;height:18px;border:1px solid #ececec;background:#e2e2e2"></div>
<div class="a" style="left:863px;top:715px;width:41px;height:18px;border:1px solid #ececec;background:#e2e2e2"></div>
<div class="a" style="left:907px;top:715px;width:34px;height:18px;border:1px solid #ececec;background:#e2e2e2"></div>
<div class="a" style="left:944px;top:715px;width:34px;height:18px;border:1px solid #ececec;background:#e2e2e2"></div>
<div class="a" style="left:981px;top:715px;width:35px;height:18px;border:1px solid #ececec;background:#e2e2e2"></div>
<div class="t serif" style="left:10px;top:715px;font-size:13.5px;line-height:16px;letter-spacing:.2px">Готово</div>
<div class="t serif" style="left:908px;top:715px;font-size:13.5px;line-height:16px;letter-spacing:0px">NUM</div>

</body></html>
